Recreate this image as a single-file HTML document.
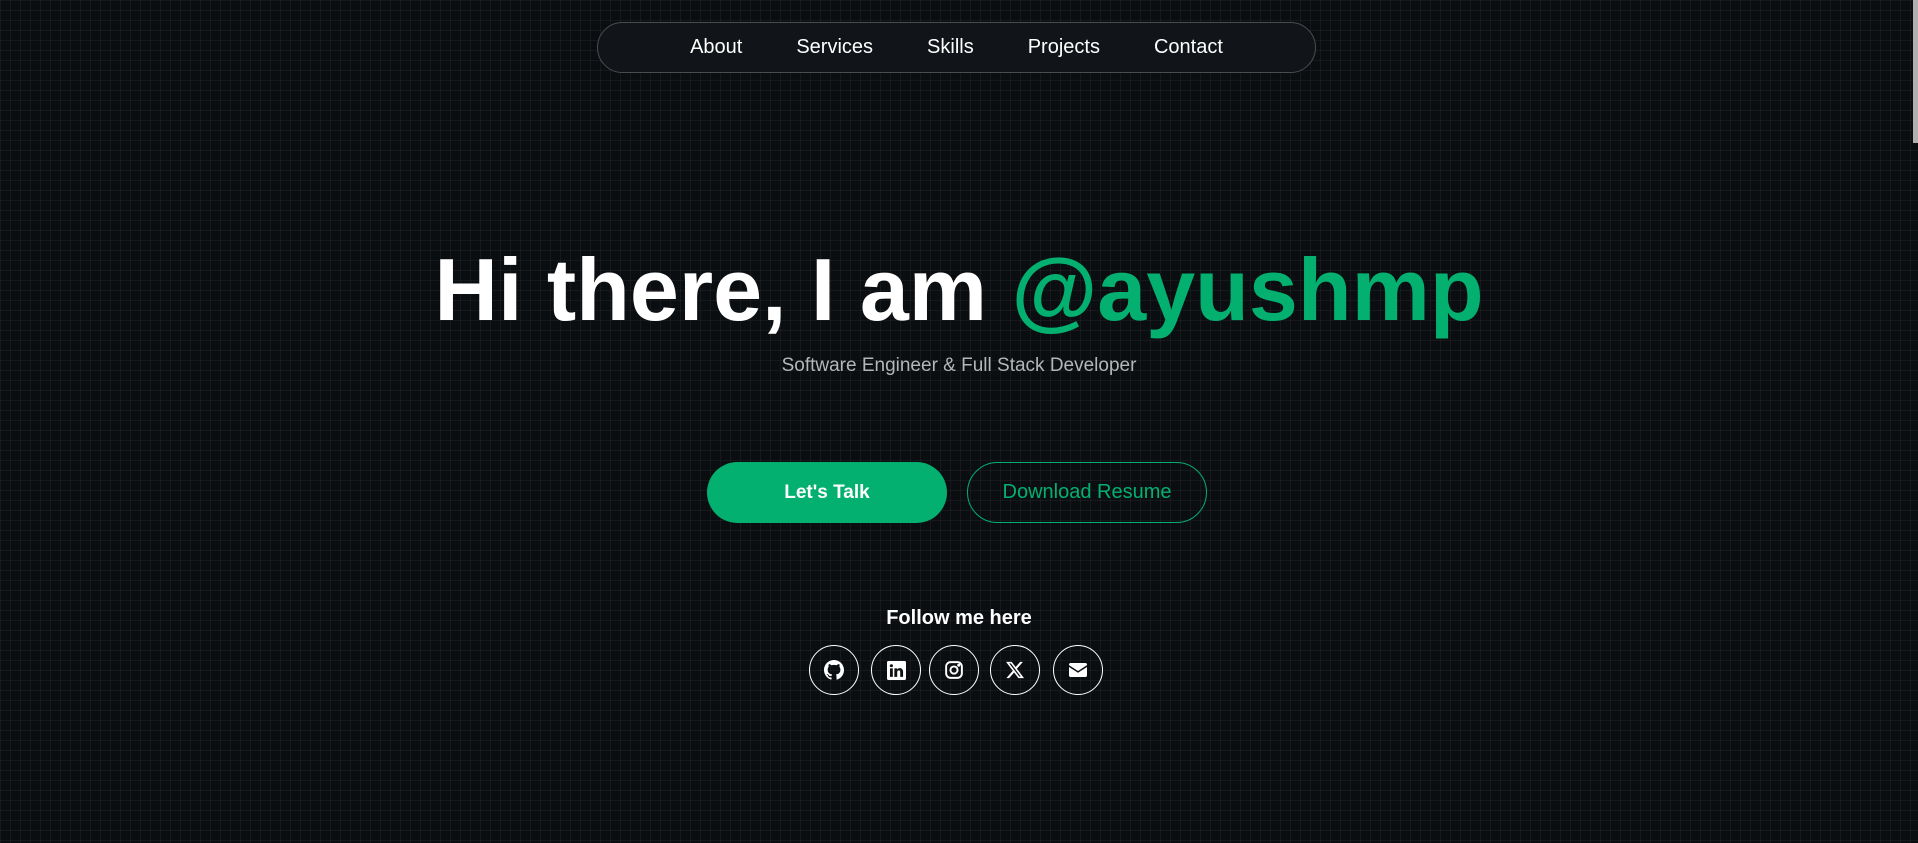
<!DOCTYPE html>
<html><head><meta charset="utf-8"><style>
html,body{margin:0;padding:0;width:1918px;height:843px;overflow:hidden}
body{background-color:#0b0e11;background-image:linear-gradient(rgba(255,255,255,0.045) 1px,transparent 1px),linear-gradient(90deg,rgba(255,255,255,0.045) 1px,transparent 1px);background-size:10px 10px;font-family:"Liberation Sans",sans-serif;color:#fff;position:relative}
.nav{position:absolute;left:597px;top:22px;width:717px;height:49px;border:1px solid #4a4d50;border-radius:26px;background:#111418;display:flex;justify-content:center;align-items:center;gap:0}
.nav a{color:#fff;font-size:20px;text-decoration:none;margin:0 27px}
h1{position:absolute;left:0;width:1918px;top:240px;margin:0;text-align:center;font-size:88px;font-weight:bold;line-height:100px}
h1 span{color:#03b06f}
.sub{position:absolute;top:355px;width:1918px;text-align:center;color:#b4b6b8;font-size:19px}
.btn{position:absolute;top:462px;width:240px;height:61px;border-radius:31px;box-sizing:border-box;display:flex;align-items:center;justify-content:center;font-size:19px;font-weight:bold}
.b1{left:707px;background:#03b06f;color:#fff}
.b2{left:967px;border:1px solid #03b06f;color:#03b06f;font-weight:normal;font-size:20px}
.follow{position:absolute;top:607px;width:1918px;text-align:center;font-size:20px;font-weight:bold}
.ic{position:absolute;top:645px;width:48px;height:48px;border:1.5px solid #fff;border-radius:50%;display:flex;align-items:center;justify-content:center}
.sb{position:absolute;right:0;top:0;width:5px;height:143px;background:#b0b0b0}
</style></head><body>
<div class="nav"><a>About</a><a>Services</a><a>Skills</a><a>Projects</a><a>Contact</a></div>
<h1>Hi there, I am <span>@ayushmp</span></h1>
<div class="sub">Software Engineer &amp; Full Stack Developer</div>
<div class="btn b1">Let's Talk</div>
<div class="btn b2">Download Resume</div>
<div class="follow">Follow me here</div>
<div class="ic" style="left:809px"><svg width="20" height="20" viewBox="0 0 16 16" fill="#fff"><path d="M8 0C3.58 0 0 3.58 0 8c0 3.54 2.29 6.530 5.47 7.59.4.07.55-.17.55-.38v-1.33c-2.23.48-2.7-1.07-2.7-1.07-.36-.92-.89-1.170-.89-1.17-.73-.5.06-.49.06-.49.8.06 1.23.83 1.23.83.72 1.23 1.88.87 2.34.67.07-.52.28-.87.51-1.07-1.78-.2-3.64-.89-3.64-3.95 0-.87.31-1.59.82-2.15-.08-.2-.36-1.02.08-2.12 0 0 .67-.21 2.2.82a7.6 7.6 0 014 0c1.53-1.04 2.2-.82 2.2-.82.44 1.1.16 1.92.08 2.12.51.56.82 1.27.82 2.15 0 3.07-1.87 3.75-3.65 3.95.29.25.54.73.54 1.48v2.2c0 .21.15.46.55.38A8 8 0 0016 8c0-4.42-3.58-8-8-8z"/></svg></div>
<div class="ic" style="left:871px"><svg width="19" height="19" viewBox="0 0 16 16" fill="#fff"><path d="M0 1.15C0 .5.5 0 1.15 0h13.7C15.5 0 16 .5 16 1.15v13.7c0 .64-.5 1.150-1.15 1.15H1.15C.5 16 0 15.5 0 14.85zM4.9 13.4V6.2H2.5v7.2zM3.7 5.2c.83 0 1.35-.55 1.35-1.24C5.03 3.25 4.53 2.7 3.7 2.7s-1.37.55-1.37 1.26c0 .69.52 1.24 1.35 1.24zm4.9 8.2V9.4c0-.22.02-.43.08-.59.17-.43.57-.88 1.23-.88.87 0 1.21.66 1.21 1.63v3.85h2.4V9.28c0-2.22-1.18-3.25-2.76-3.25-1.27 0-1.85.7-2.16 1.19V6.2H6.2c.03.68 0 7.2 0 7.2z"/></svg></div>
<div class="ic" style="left:929px"><svg width="18" height="18" viewBox="0 0 16 16" fill="none" stroke="#fff" stroke-width="1.7"><rect x="1" y="1" width="14" height="14" rx="4"/><circle cx="8" cy="8" r="3.2"/><circle cx="12.2" cy="3.8" r=".5" fill="#fff"/></svg></div>
<div class="ic" style="left:990px"><svg width="18" height="18" viewBox="0 0 16 16" fill="#fff"><path d="M12.6.75h2.45L9.7 6.87 16 15.25h-4.93l-3.86-5.05-4.420 5.05H.33l5.73-6.55L0 .75h5.06l3.49 4.62zm-.86 13.03h1.36L4.32 2.15H2.86z"/></svg></div>
<div class="ic" style="left:1053px"><svg width="20" height="16" viewBox="0 0 20 16" fill="#fff"><path d="M1 2.5C1 1.7 1.7 1 2.5 1h15c.8 0 1.5.7 1.5 1.5v.6L10 9 1 3.1z"/><path d="M1 5l9 5.8L19 5v8.5c0 .8-.7 1.5-1.5 1.5h-15C1.7 15 1 14.3 1 13.5z"/></svg></div>
<div class="sb"></div>
</body></html>
